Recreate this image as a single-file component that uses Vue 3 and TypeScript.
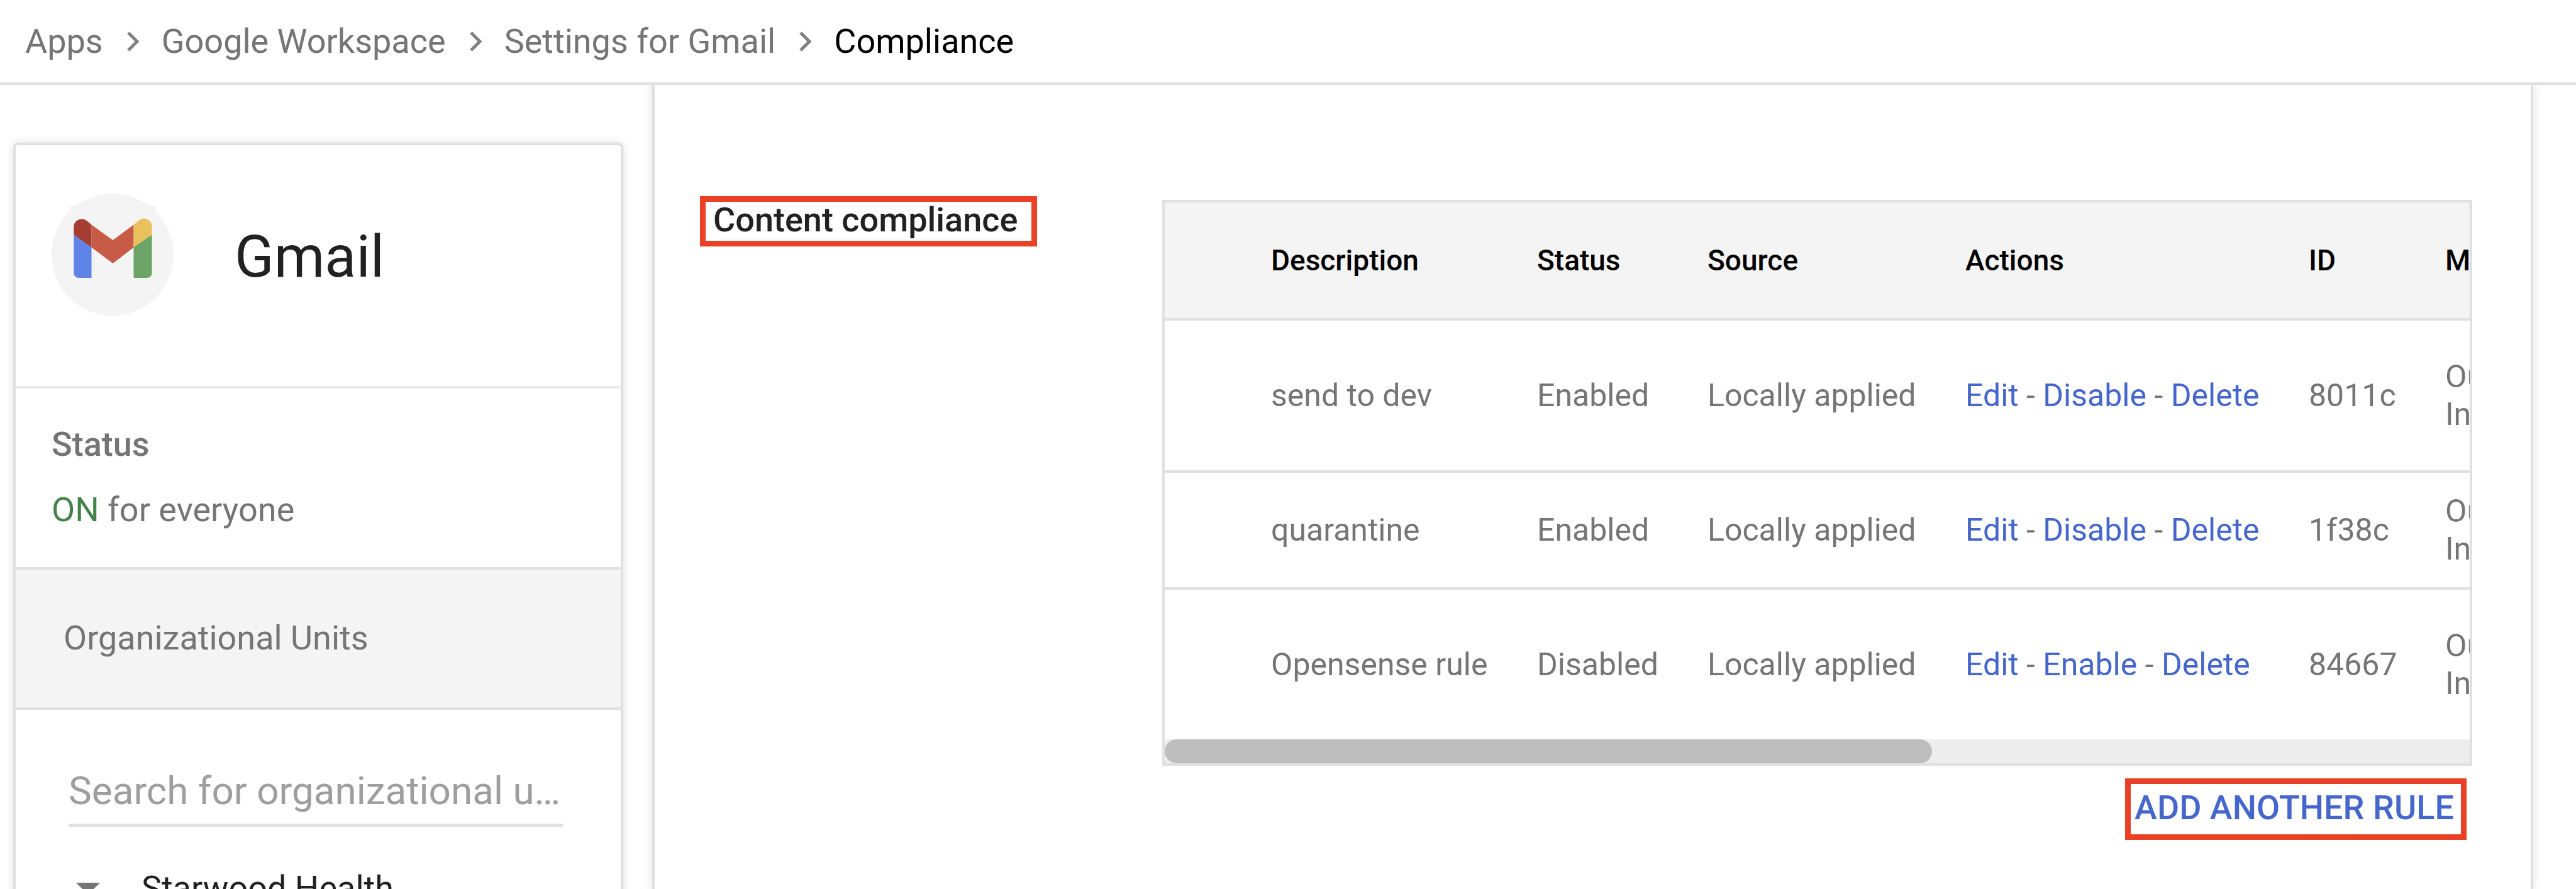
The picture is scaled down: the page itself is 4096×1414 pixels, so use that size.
<script setup lang="ts">
interface Rule {
  description: string
  status: string
  toggle: string
  id: string
}

const trail: string[] = ['Apps', 'Google Workspace', 'Settings for Gmail']

const rules: Rule[] = [
  { description: 'send to dev', status: 'Enabled', toggle: 'Disable', id: '8011c' },
  { description: 'quarantine', status: 'Enabled', toggle: 'Disable', id: '1f38c' },
  { description: 'Opensense rule', status: 'Disabled', toggle: 'Enable', id: '84667' },
]
</script>

<template>
  <div class="page">
    <nav class="crumbs" aria-label="Breadcrumb">
      <template v-for="item in trail" :key="item">
        <a href="#" class="crumb">{{ item }}</a>
        <svg class="chevron" viewBox="0 0 22 34" aria-hidden="true">
          <path d="M3 3 L17 17 L3 31" fill="none" stroke="#808080" stroke-width="5" />
        </svg>
      </template>
      <span class="crumb current" aria-current="page">Compliance</span>
    </nav>

    <div class="body">
      <aside class="sidebar">
        <div class="card">
          <header class="app">
            <svg class="logo" viewBox="0 0 220 220" aria-hidden="true">
              <circle cx="110" cy="110" r="110" fill="#f4f4f4" />
              <rect x="34" y="22" width="154" height="154" fill="#f4f4f4" />
              <path d="M40 74 L72 96 V152 H50 Q40 152 40 142 Z" fill="#5f84e8" />
              <path d="M181 74 L148 96 V152 H171 Q181 152 181 142 Z" fill="#6da568" />
              <path d="M72 56 L110.500 84 L148 56 V97 L110.500 126 L72 97 Z" fill="#c85b47" />
              <path d="M40 74 V59 A14.500 14.500 0 0 1 63 48.500 L72 56 V97 Z" fill="#a63d31" />
              <path d="M181 74 V59 A14.500 14.500 0 0 0 157 48.500 L148 56 V97 Z" fill="#e8c15c" />
            </svg>
            <h1>Gmail</h1>
          </header>
          <section class="status">
            <h2>Status</h2>
            <p><span class="on">ON</span> for everyone</p>
          </section>
          <h2 class="units">Organizational Units</h2>
          <div class="tree">
            <input type="text" class="search" placeholder="Search for organizational units" aria-label="Search for organizational units" />
            <button type="button" class="node">
              <svg class="caret" viewBox="0 0 38 19" aria-hidden="true"><path d="M0 0 H38 L19 19 Z" fill="#757575" /></svg>
              Starwood Health
            </button>
          </div>
        </div>
      </aside>

      <main class="panel">
        <h2 class="title">Content compliance</h2>
        <div class="rules">
          <div class="frame">
            <div class="viewport">
              <table>
                <colgroup>
                  <col class="c-blank" /><col class="c-desc" /><col class="c-status" /><col class="c-source" />
                  <col class="c-actions" /><col class="c-id" /><col class="c-messages" />
                </colgroup>
                <thead>
                  <tr>
                    <th></th>
                    <th>Description</th>
                    <th>Status</th>
                    <th>Source</th>
                    <th>Actions</th>
                    <th>ID</th>
                    <th>Messages</th>
                  </tr>
                </thead>
                <tbody>
                  <tr v-for="rule in rules" :key="rule.id">
                    <td></td>
                    <td>{{ rule.description }}</td>
                    <td>{{ rule.status }}</td>
                    <td>Locally applied</td>
                    <td><a href="#">Edit</a> - <a href="#">{{ rule.toggle }}</a> - <a href="#">Delete</a></td>
                    <td>{{ rule.id }}</td>
                    <td>Outbound<br />Internal</td>
                  </tr>
                </tbody>
              </table>
            </div>
            <div class="track"><div class="thumb"></div></div>
          </div>
          <button type="button" class="add">ADD ANOTHER RULE</button>
        </div>
      </main>
    </div>
  </div>
</template>

<style>
body {
  margin: 0;
  background: #fff;
}
</style>

<style scoped>
* {
  box-sizing: border-box;
}
.page {
  height: 100vh;
  overflow: hidden;
  display: flex;
  flex-direction: column;
  background: #fff;
  color: #757575;
  font-family: Roboto, "Liberation Sans", sans-serif;
  font-size: 54px;
  line-height: 64px;
}
h1, h2, p {
  margin: 0;
  font-size: inherit;
  font-weight: 400;
}
a {
  color: #4567cb;
  text-decoration: none;
}
button {
  font: inherit;
  background: none;
  cursor: pointer;
}

.crumbs {
  flex: none;
  display: flex;
  align-items: center;
  height: 135px;
  padding-left: 40px;
  border-bottom: 4px solid #e0e0e0;
}
.crumb {
  color: #757575;
}
.current {
  color: #000;
}
.chevron {
  width: 22px;
  height: 34px;
  margin: 0 34px 0 37px;
}

.body {
  flex: 1;
  min-height: 0;
  display: flex;
}
.sidebar {
  flex: none;
  width: 1041px;
  padding: 96px 54px 0 25px;
}
.card {
  height: 1400px;
  border-radius: 4px;
  box-shadow: 0 0 0 4px #e0e0e0, 0 0 14px 4px rgba(0, 0, 0, 0.12);
}
.app {
  display: flex;
  align-items: flex-start;
  height: 387px;
  padding: 77px 0 0 57px;
  border-bottom: 4px solid #ebebeb;
}
.logo {
  flex: none;
  width: 194px;
  height: 194px;
}
h1 {
  margin-left: 97px;
  padding-top: 4px;
  font-size: 92px;
  line-height: 194px;
  color: #212121;
}
.status {
  height: 288px;
  padding: 57px 57px 0;
  border-bottom: 4px solid #e0e0e0;
}
.status h2 {
  font-weight: 500;
  margin-bottom: 40px;
}
.on {
  color: #43834a;
}
.units {
  height: 223px;
  padding-left: 76px;
  line-height: 218px;
  background: #f4f4f4;
  border-bottom: 4px solid #e0e0e0;
}
.tree {
  padding: 86px 92px 0 84px;
}
.search {
  display: block;
  width: 100%;
  height: 100px;
  padding: 0 0 10px;
  border: 0;
  border-bottom: 5px solid #e0e0e0;
  outline: 0;
  background: none;
  font: inherit;
  font-size: 62px;
  text-overflow: ellipsis;
}
.search::placeholder {
  color: #9e9e9e;
  opacity: 1;
}
.node {
  display: flex;
  align-items: center;
  margin-top: 66px;
  padding: 0 0 0 12px;
  border: 0;
  color: #212121;
}
.caret {
  width: 38px;
  height: 19px;
  margin-right: 66px;
}

.panel {
  flex: 1;
  min-width: 0;
  display: flex;
  align-items: flex-start;
  justify-content: space-between;
  margin-right: 72px;
  padding: 177px 93px 0 72px;
  box-shadow: 0 0 0 4px #e0e0e0, 0 0 14px 4px rgba(0, 0, 0, 0.12);
  clip-path: inset(0 -24px);
}
.title {
  flex: none;
  padding: 0 22px 4px 12px;
  border: 9px solid #ea4025;
  line-height: 58px;
  font-weight: 500;
  color: #212121;
}
.rules {
  width: 2083px;
  padding-top: 6px;
}
.frame {
  border: 4px solid #e0e0e0;
}
.viewport {
  overflow: hidden;
}
table {
  width: 3529px;
  table-layout: fixed;
  border-collapse: separate;
  border-spacing: 0;
}
.c-blank { width: 130px; }
.c-desc { width: 423px; }
.c-status { width: 271px; }
.c-source { width: 410px; }
.c-actions { width: 546px; }
.c-id { width: 217px; }
th,
td {
  padding: 0 39px;
  text-align: left;
  vertical-align: middle;
  white-space: nowrap;
  border-bottom: 4px solid #e0e0e0;
}
th {
  height: 188px;
  background: #f4f4f4;
  font-size: 46px;
  font-weight: 500;
  color: #000;
}
td {
  height: 242px;
  font-size: 50px;
  line-height: 60px;
}
tr:nth-child(2) td {
  height: 186px;
}
tr:last-child td {
  height: 238px;
  border-bottom: 0;
}
.track {
  height: 38px;
  background: #ededed;
}
.thumb {
  width: 1220px;
  height: 38px;
  border-radius: 19px;
  background: #bdbdbd;
}
.add {
  display: block;
  margin: 20px 9px 0 auto;
  padding: 8px 11px 12px 6px;
  border: 9px solid #ea4025;
  line-height: 60px;
  font-weight: 500;
  color: #4567cb;
}
</style>
